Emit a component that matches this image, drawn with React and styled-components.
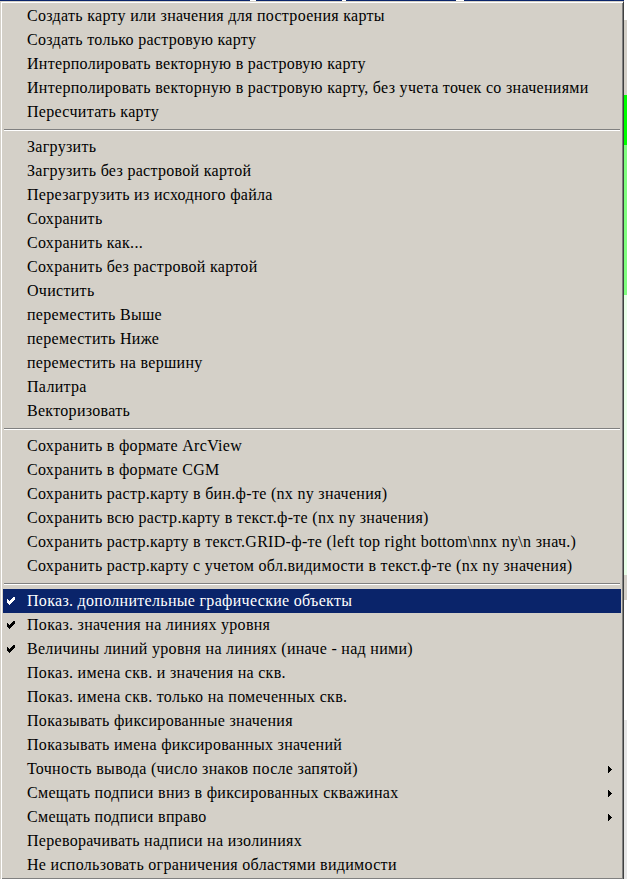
import React from 'react'
import styled, { createGlobalStyle } from 'styled-components';

const GlobalStyle = createGlobalStyle`
  html, body {
    margin: 0;
    padding: 0;
    background: #ffffff;
    overflow: hidden;
  }
`;

const groups = [
  [
    { label: 'Создать карту или значения для построения карты' },
    { label: 'Создать только растровую карту' },
    { label: 'Интерполировать векторную в растровую карту' },
    { label: 'Интерполировать векторную в растровую карту, без учета точек со значениями' },
    { label: 'Пересчитать карту' },
  ],
  [
    { label: 'Загрузить' },
    { label: 'Загрузить без растровой картой' },
    { label: 'Перезагрузить из исходного файла' },
    { label: 'Сохранить' },
    { label: 'Сохранить как...' },
    { label: 'Сохранить без растровой картой' },
    { label: 'Очистить' },
    { label: 'переместить Выше' },
    { label: 'переместить Ниже' },
    { label: 'переместить на вершину' },
    { label: 'Палитра' },
    { label: 'Векторизовать' },
  ],
  [
    { label: 'Сохранить в формате ArcView' },
    { label: 'Сохранить в формате CGM' },
    { label: 'Сохранить растр.карту в бин.ф-те (nx ny значения)' },
    { label: 'Сохранить всю растр.карту в текст.ф-те (nx ny значения)' },
    { label: 'Сохранить растр.карту в текст.GRID-ф-те (left top right bottom\\nnx ny\\n знач.)' },
    { label: 'Сохранить растр.карту с учетом обл.видимости в текст.ф-те (nx ny значения)' },
  ],
  [
    { label: 'Показ. дополнительные графические объекты', checked: true, active: true },
    { label: 'Показ. значения на линиях уровня', checked: true },
    { label: 'Величины линий уровня на линиях (иначе - над ними)', checked: true },
    { label: 'Показ. имена скв. и значения на скв.' },
    { label: 'Показ. имена скв. только на помеченных скв.' },
    { label: 'Показывать фиксированные значения' },
    { label: 'Показывать имена фиксированных значений' },
    { label: 'Точность вывода (число знаков после запятой)', sub: true },
    { label: 'Смещать подписи вниз в фиксированных скважинах', sub: true },
    { label: 'Смещать подписи вправо', sub: true },
    { label: 'Переворачивать надписи на изолиниях' },
    { label: 'Не использовать ограничения областями видимости' },
  ],
];

// bits of the window behind the popup
const topBits = ['#0a246a', '#ffffff', '#0a246a', '#ffffff', '#0a246a', '#ffffff', '#0a246a'];
const topWidths = [250, 6, 86, 4, 110, 8, 163];
const sideBits = [
  { c: '#ffffff', h: 20 },
  { c: '#d4d0c8', h: 75 },
  { c: '#00ff00', h: 50 },
  { c: '#80ff80', h: 150 },
  { c: '#e8ffe8', h: 280 },
  { c: '#d4d0c8', h: 25 },
  { c: '#ffffff', h: 120 },
  { c: '#e6e6e6', h: 159 },
];

const Check = () => (
  <svg width="8" height="8" viewBox="0 0 8 8" shapeRendering="crispEdges">
    <path d="M6 0h2v1H6zM5 1h3v1H5zM0 2h1v1H0zM4 2h4v1H4zM0 3h2v1H0zM3 3h4v1H3zM0 4h6v1H0zM0 5h5v1H0zM1 6h3v1H1zM2 7h1v1H2z" fill="currentColor" />
  </svg>
);

const Arrow = () => (
  <svg width="4" height="7" viewBox="0 0 4 7" shapeRendering="crispEdges">
    <path d="M0 0h1v7H0zM1 1h1v5H1zM2 2h1v3H2zM3 3h1v1H3z" fill="currentColor" />
  </svg>
);

const App = () => {
  return <Screen>
    <GlobalStyle />
    <TopStrip>
      {topBits.map((c, i) => <Bit key={i} $color={c} style={{ width: topWidths[i] }} />)}
    </TopStrip>
    <Main>
      <Menu>
        {groups.map((g, gi) => (
          <React.Fragment key={gi}>
            {gi > 0 && <Separator />}
            {g.map((item) => (
              <Item key={item.label} $active={item.active}>
                <CheckSlot>{item.checked && <Check />}</CheckSlot>
                <Label>{item.label}</Label>
                <ArrowSlot>{item.sub && <Arrow />}</ArrowSlot>
              </Item>
            ))}
          </React.Fragment>
        ))}
      </Menu>
      <SideStrip>
        {sideBits.map((b, i) => <Bit key={i} $color={b.c} style={{ height: b.h }} />)}
      </SideStrip>
    </Main>
  </Screen>
};

const Screen = styled.div`
  width: 627px;
  height: 879px;
  display: flex;
  flex-direction: column;
  overflow: hidden;
  font-family: "Liberation Serif", "Times New Roman", serif;
`;

const TopStrip = styled.div`
  height: 1px;
  display: flex;
  flex-shrink: 0;
`;

const Bit = styled.div`
  background: ${({ $color }) => $color};
  flex-shrink: 0;
`;

const Main = styled.div`
  display: flex;
  align-items: flex-start;
`;

const SideStrip = styled.div`
  width: 3px;
  margin-top: -1px;
  display: flex;
  flex-direction: column;
  flex-shrink: 0;
`;

const Menu = styled.div`
  width: 624px;
  box-sizing: border-box;
  flex-shrink: 0;
  background: #d4d0c8;
  border: 1px solid;
  border-color: #d4d0c8 #404040 #404040 #d4d0c8;
  box-shadow: inset 1px 1px #ffffff, inset -1px -1px #808080;
  padding: 2px;
`;

const Item = styled.div`
  height: 24px;
  display: flex;
  align-items: center;
  background: ${({ $active }) => ($active ? '#0a246a' : 'transparent')};
  color: ${({ $active }) => ($active ? '#ffffff' : '#000000')};
`;

const CheckSlot = styled.div`
  width: 24px;
  flex-shrink: 0;
  display: flex;
  padding-left: 4px;
  box-sizing: border-box;
  align-items: center;
  height: 100%;
`;

const Label = styled.span`
  flex: 1;
  font-size: 16px;
  letter-spacing: 0.3px;
  line-height: 24px;
  white-space: nowrap;
`;

const ArrowSlot = styled.div`
  width: 13px;
  flex-shrink: 0;
  display: flex;
  align-items: center;
`;

const Separator = styled.div`
  height: 2px;
  margin: 5px 1px 4px;
  border-top: 1px solid #808080;
  border-bottom: 1px solid #ffffff;
  box-sizing: border-box;
`;

export default App
